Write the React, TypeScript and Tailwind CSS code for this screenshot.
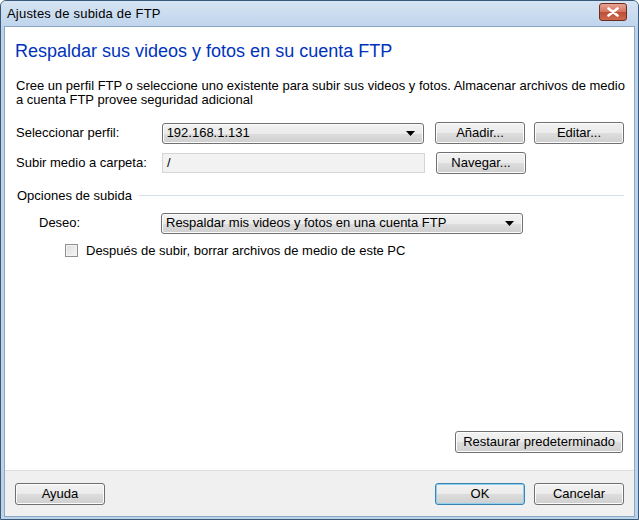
import React from 'react';

const font = { fontFamily: '"Liberation Sans", Arial, sans-serif' };

// Win7-style push button
const Btn: React.FC<{ label: string; w: string; focused?: boolean }> = ({ label, w, focused }) => (
  <div
    className={`${w} h-[22px] rounded-[3px] border flex items-center justify-center text-[13px] text-black bg-[linear-gradient(#f2f2f2_0%,#ebebeb_50%,#dddddd_51%,#cfcfcf_100%)] ${
      focused ? 'border-[#3c7fb1] shadow-[inset_0_0_0_1px_#8fd2f0]' : 'border-[#707070] shadow-[inset_0_0_0_1px_#fcfcfc]'
    }`}
  >
    {label}
  </div>
);

const Combo: React.FC<{ value: string; w: string }> = ({ value, w }) => (
  <div className={`${w} h-[21px] rounded-[3px] border border-[#707070] flex items-center pl-[4px] pr-[8px] text-[13px] text-black bg-[linear-gradient(#f2f2f2_0%,#ebebeb_50%,#dddddd_51%,#cfcfcf_100%)] shadow-[inset_0_0_0_1px_#fcfcfc]`}>
    <span className="flex-1">{value}</span>
    <svg width="9" height="5" viewBox="0 0 9 5">
      <path d="M0 0h9L4.5 5z" fill="#000" />
    </svg>
  </div>
);

export default function App() {
  return (
    <div className="w-[639px] h-[520px] flex flex-col bg-[#bcd3ea] border border-[#3a5a7c] rounded-t-[6px] overflow-hidden" style={font}>
      {/* Title bar */}
      <div className="h-[25px] flex items-center pl-[6px] pr-[11px] bg-[linear-gradient(#d5e4f3,#c0d5ec)]">
        <span className="flex-1 text-[13px] tracking-[0.2px] text-black">Ajustes de subida de FTP</span>
        <div className="w-[28px] h-[18px] mt-[-4px] rounded-[3px] border border-[#6d2b22] bg-[linear-gradient(#e8a493,#d0735e_50%,#bf4d36_51%,#cc6a4d)] flex items-center justify-center">
          <svg width="12" height="10" viewBox="0 0 12 10">
            <path d="M1.5 1.5l9 7M10.5 1.5l-9 7" stroke="#fff" strokeWidth="2.6" strokeLinecap="round" />
          </svg>
        </div>
      </div>

      <div className="flex-1 flex flex-col mx-[3px] mb-[2px] border border-[#8ca7c4]">
        {/* Main content */}
        <div className="flex-1 bg-white flex flex-col pl-[10px] pr-[10px]">
          <div className="mt-[13px] text-[18px] leading-[22px] text-[#0033bc]">
            Respaldar sus videos y fotos en su cuenta FTP
          </div>

          <div className="mt-[17px] ml-[1px] mr-[-10px] text-[13px] leading-[13.5px] text-black">
            Cree un perfil FTP o seleccione uno existente para subir sus videos y fotos. Almacenar archivos de medio a cuenta FTP provee seguridad adicional
          </div>

          <div className="mt-[16px] flex items-center">
            <span className="w-[146px] ml-[1px] text-[13px]">Seleccionar perfil:</span>
            <Combo value="192.168.1.131" w="w-[263px]" />
            <div className="ml-[11px]">
              <Btn label="Añadir..." w="w-[90px]" />
            </div>
            <div className="ml-[9px]">
              <Btn label="Editar..." w="w-[90px]" />
            </div>
          </div>

          <div className="mt-[8px] flex items-center">
            <span className="w-[146px] ml-[1px] text-[13px]">Subir medio a carpeta:</span>
            <div className="w-[263px] h-[20px] border border-[#d5d5d5] bg-[#f2f2f2] flex items-center pl-[4px] text-[13px]">/</div>
            <div className="ml-[11px]">
              <Btn label="Navegar..." w="w-[90px]" />
            </div>
          </div>

          <div className="mt-[12px] flex items-center">
            <span className="ml-[2px] text-[13px]">Opciones de subida</span>
            <div className="flex-1 ml-[7px] h-[2px] border-t border-[#d5dfe5] border-b border-b-white" />
          </div>

          <div className="mt-[7px] flex items-center">
            <span className="w-[122px] ml-[24px] text-[13px]">Deseo:</span>
            <Combo value="Respaldar mis videos y fotos en una cuenta FTP" w="w-[362px]" />
          </div>

          <div className="mt-[7px] flex items-center">
            <div className="ml-[50px] w-[13px] h-[13px] border border-[#8e8f8f] bg-[linear-gradient(135deg,#dcdcdc,#f7f7f7)] shadow-[inset_0_0_0_1px_#f4f4f4]" />
            <span className="ml-[8px] text-[13px]">Después de subir, borrar archivos de medio de este PC</span>
          </div>

          <div className="flex-1" />
          <div className="mb-[17px] flex justify-end pr-[1px]">
            <Btn label="Restaurar predeterminado" w="w-[168px]" />
          </div>
        </div>

        {/* Footer */}
        <div className="h-[46px] bg-[#f0f0f0] border-t border-[#dfdfdf] flex items-center pl-[10px] pr-[10px]">
          <Btn label="Ayuda" w="w-[90px]" />
          <div className="flex-1" />
          <Btn label="OK" w="w-[90px]" focused />
          <div className="ml-[9px]">
            <Btn label="Cancelar" w="w-[90px]" />
          </div>
        </div>
      </div>
    </div>
  );
}
